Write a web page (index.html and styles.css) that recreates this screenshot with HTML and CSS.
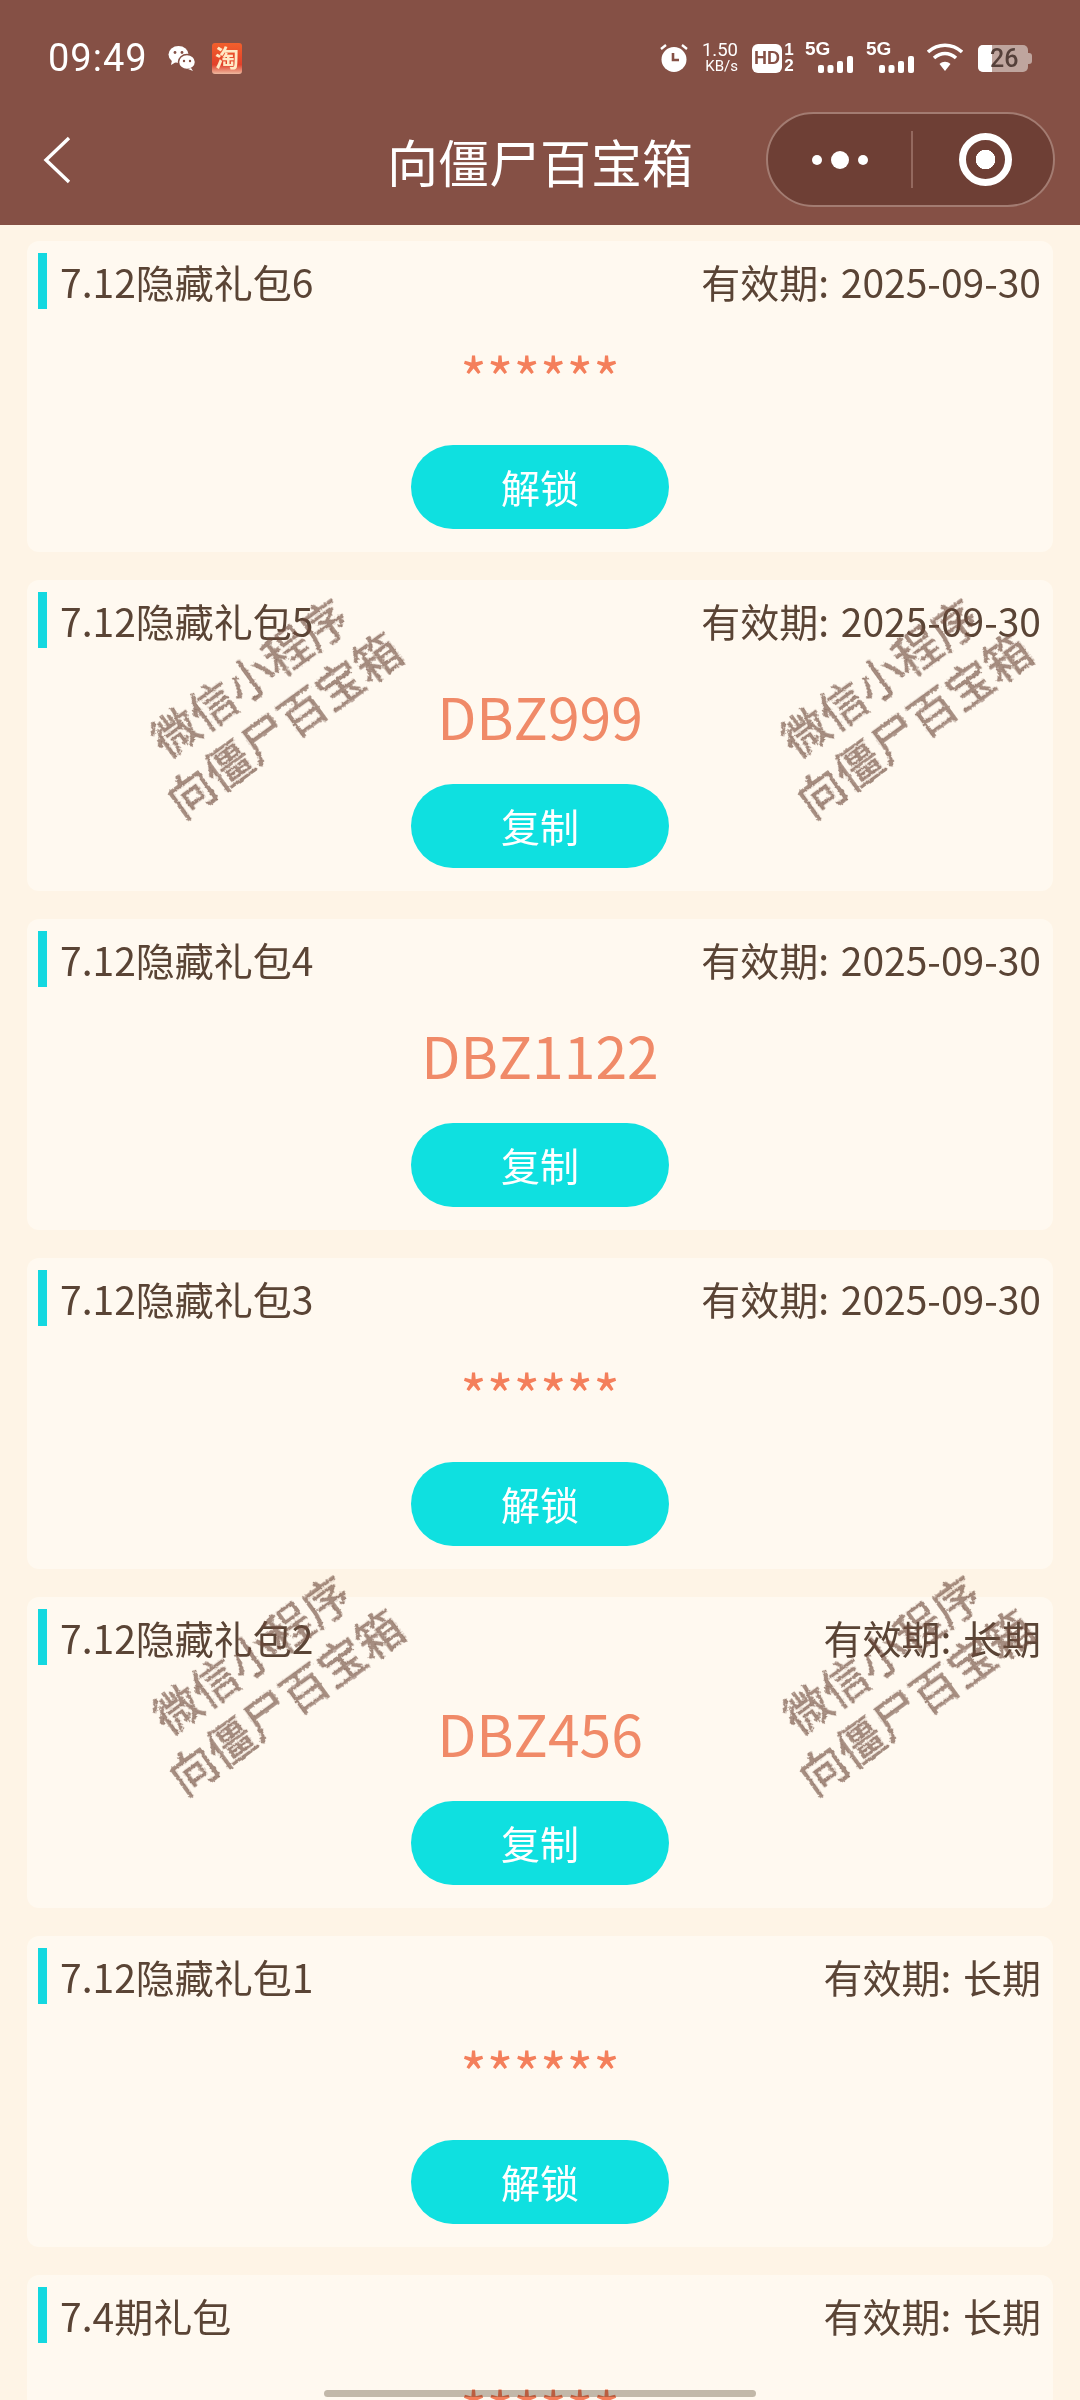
FILE: index.html
```html
<!DOCTYPE html>
<html lang="zh-CN">
<head>
    <meta charset="UTF-8">
    <meta name="viewport" content="width=device-width, initial-scale=1.0">
    <title>向僵尸百宝箱</title>
    <link rel="stylesheet" href="styles.css">
</head>
<body>
    <div class="top">
        <div class="status">
            <span class="time">09:49</span>
            <svg class="ic-wechat" width="28" height="26" viewBox="0 0 28 26">
                <ellipse cx="10.5" cy="9.5" rx="10" ry="8.5" fill="#fff"/>
                <path d="M4 15l-1 5 5-3z" fill="#fff"/>
                <ellipse cx="19" cy="17" rx="8.5" ry="7.5" fill="#fff" stroke="#855045" stroke-width="1.5"/>
                <path d="M23 23l2 3-5-2z" fill="#fff"/>
                <circle cx="7" cy="7.5" r="1.4" fill="#855045"/>
                <circle cx="14" cy="7.5" r="1.4" fill="#855045"/>
                <circle cx="16" cy="16" r="1.2" fill="#855045"/>
                <circle cx="22" cy="16" r="1.2" fill="#855045"/>
            </svg>
            <span class="ic-taobao">淘</span>
            <span class="status-right">
                <svg width="30" height="30" viewBox="0 0 30 30">
                    <circle cx="15" cy="16.5" r="12.5" fill="#fff"/>
                    <path d="M14 10v7h6" fill="none" stroke="#855045" stroke-width="2.6"/>
                    <path d="M2 6l5-4M28 6l-5-4" stroke="#fff" stroke-width="2.4"/>
                </svg>
                <span class="speed"><b>1.50</b><i>KB/s</i></span>
                <span class="hd">HD</span>
                <span class="sim"><i>1</i><i>2</i></span>
                <svg class="signal" width="48" height="32" viewBox="0 0 48 32">
                    <text x="0" y="13" class="sig-text">5G</text>
                    <rect x="13" y="23" width="6" height="8" rx="2" fill="#fff"/>
                    <rect x="22.500" y="23" width="6" height="8" rx="2" fill="#fff"/>
                    <rect x="32" y="19" width="6" height="12" rx="2" fill="#fff"/>
                    <rect x="42" y="14" width="6" height="17" rx="2" fill="#fff"/>
                </svg>
                <svg class="signal" width="48" height="32" viewBox="0 0 48 32">
                    <text x="0" y="13" class="sig-text">5G</text>
                    <rect x="13" y="23" width="6" height="8" rx="2" fill="#fff"/>
                    <rect x="22.500" y="23" width="6" height="8" rx="2" fill="#fff"/>
                    <rect x="32" y="19" width="6" height="12" rx="2" fill="#fff"/>
                    <rect x="42" y="14" width="6" height="17" rx="2" fill="#fff"/>
                </svg>
                <svg width="36" height="30" viewBox="0 0 36 30">
                    <path d="M1 9c10-9 24-9 34 0" fill="none" stroke="#fff" stroke-width="3.600"/>
                    <path d="M7 15c7-6 15-6 22 0" fill="none" stroke="#fff" stroke-width="3.600"/>
                    <path d="M12.500 21c3.500-3 7.500-3 11 0L18 28z" fill="#fff"/>
                </svg>
                <span class="battery"><span class="battery-fill"></span><span class="battery-num">26</span></span>
            </span>
        </div>
        <div class="nav">
            <svg class="back" width="28" height="48" viewBox="0 0 28 48">
                <path d="M26 2L3 24l23 22" fill="none" stroke="#fff" stroke-width="3.400"/>
            </svg>
            <h1 class="title">向僵尸百宝箱</h1>
            <div class="capsule">
                <div class="dots"><span></span><span class="big"></span><span></span></div>
                <div class="divider"></div>
                <div class="ring"><span></span></div>
            </div>
        </div>
    </div>

    <div class="list">
        <div class="card">
            <div class="head"><div class="name">7.12隐藏礼包6</div><div class="expire">有效期: 2025-09-30</div></div>
            <div class="code stars">******</div>
            <button class="btn">解锁</button>
        </div>
        <div class="card">
            <div class="head"><div class="name">7.12隐藏礼包5</div><div class="expire">有效期: 2025-09-30</div></div>
            <div class="code">DBZ999</div>
            <button class="btn">复制</button>
        </div>
        <div class="card">
            <div class="head"><div class="name">7.12隐藏礼包4</div><div class="expire">有效期: 2025-09-30</div></div>
            <div class="code">DBZ1122</div>
            <button class="btn">复制</button>
        </div>
        <div class="card">
            <div class="head"><div class="name">7.12隐藏礼包3</div><div class="expire">有效期: 2025-09-30</div></div>
            <div class="code stars">******</div>
            <button class="btn">解锁</button>
        </div>
        <div class="card">
            <div class="head"><div class="name">7.12隐藏礼包2</div><div class="expire">有效期: 长期</div></div>
            <div class="code">DBZ456</div>
            <button class="btn">复制</button>
        </div>
        <div class="card">
            <div class="head"><div class="name">7.12隐藏礼包1</div><div class="expire">有效期: 长期</div></div>
            <div class="code stars">******</div>
            <button class="btn">解锁</button>
        </div>
        <div class="card">
            <div class="head"><div class="name">7.4期礼包</div><div class="expire">有效期: 长期</div></div>
            <div class="code stars">******</div>
            <button class="btn">解锁</button>
        </div>
    </div>

    <!-- watermark sits on top of the list -->
    <div class="mark mark-a">微信小程序<br>向僵尸百宝箱</div>
    <div class="mark mark-b">微信小程序<br>向僵尸百宝箱</div>
    <div class="mark mark-c">微信小程序<br>向僵尸百宝箱</div>
    <div class="mark mark-d">微信小程序<br>向僵尸百宝箱</div>

    <div class="home-bar"></div>

    <!-- roughens the watermark edges -->
    <svg class="defs" width="0" height="0">
        <filter id="rough" x="-5%" y="-5%" width="110%" height="110%">
            <feTurbulence type="fractalNoise" baseFrequency="0.45" numOctaves="1" seed="4" result="n"/>
            <feDisplacementMap in="SourceGraphic" in2="n" scale="4"/>
        </filter>
    </svg>
</body>
</html>
```

FILE: styles.css
```css
html, body {
    margin: 0;
    height: 2400px;
    overflow: hidden;
}
body {
    position: relative;
    font-family: "Noto Sans CJK SC", "Noto Sans", sans-serif;
    background: #fef4e6;
    color: #5a4435;
}
.defs {
    position: absolute;
}

/* status bar + nav */
.top {
    height: 225px;
    background: #855045;
    color: white;
}
.status {
    height: 112px;
    display: flex;
    align-items: center;
    padding: 4px 48px 0 48px;
    box-sizing: border-box;
}
.time {
    width: 96px;
    font-family: Roboto, sans-serif;
    font-size: 38px;
    letter-spacing: 1px;
    white-space: nowrap;
    margin-right: 24px;
}
.ic-wechat {
    margin-right: 16px;
}
.ic-taobao {
    width: 30px;
    height: 31px;
    border-radius: 3px;
    background: linear-gradient(#f2602c, #e2402a 70%, #eeb9a0);
    font-size: 24px;
    line-height: 27px;
    font-weight: bold;
    text-align: center;
    color: #ffe9c4;
}
.status-right {
    margin-left: auto;
    display: flex;
    align-items: center;
}
.speed {
    display: flex;
    flex-direction: column;
    align-items: flex-end;
    width: 36px;
    margin-left: 13px;
    font-family: Roboto, sans-serif;
    line-height: 16px;
}
.speed b {
    font-size: 18.5px;
    font-weight: 400;
}
.speed i {
    font-size: 15px;
    font-style: normal;
}
.hd {
    margin-left: 14px;
    width: 30px;
    height: 29px;
    border-radius: 6px;
    background: white;
    color: #855045;
    font-family: "Liberation Sans", sans-serif;
    font-size: 18px;
    font-weight: bold;
    line-height: 29px;
    text-align: center;
}
.sim {
    display: flex;
    flex-direction: column;
    width: 12px;
    margin-left: 1px;
    margin-right: 10px;
    font-family: "Liberation Sans", sans-serif;
    font-size: 17px;
    font-weight: bold;
    line-height: 16px;
    text-align: center;
}
.sim i {
    font-style: normal;
}
.signal {
    margin-right: 12px;
    overflow: visible;
}
.signal + svg {
    margin-left: 1px;
}
.sig-text {
    font-family: "Liberation Sans", sans-serif;
    font-size: 19px;
    font-weight: bold;
    fill: white;
}
.battery {
    position: relative;
    margin-left: 15px;
    margin-right: 4px;
    width: 50px;
    height: 27px;
    border-radius: 5px;
    background: #bfa59e;
}
.battery::after {
    content: "";
    position: absolute;
    left: 50px;
    top: 8px;
    width: 4px;
    height: 11px;
    border-radius: 0 3px 3px 0;
    background: #bfa59e;
}
.battery-fill {
    display: block;
    width: 14px;
    height: 27px;
    border-radius: 5px 0 0 5px;
    background: white;
}
.battery-num {
    position: absolute;
    left: 12px;
    top: 0;
    font-family: Roboto, sans-serif;
    font-size: 25px;
    font-weight: 500;
    line-height: 27px;
    color: #55403a;
}

.nav {
    position: relative;
    height: 113px;
    box-sizing: border-box;
    padding-bottom: 16px;
    display: flex;
    align-items: center;
    justify-content: center;
}
.back {
    position: absolute;
    left: 43px;
    top: 24px;
}
.title {
    margin: 0;
    font-size: 51px;
    font-weight: normal;
    line-height: 96px;
}
.capsule {
    position: absolute;
    left: 766px;
    top: 0;
    width: 289px;
    height: 95px;
    box-sizing: border-box;
    display: flex;
    align-items: center;
    background: #6e3f35;
    border: 2px solid #a37c72;
    border-radius: 48px;
}
.dots {
    width: 143px;
    display: flex;
    justify-content: center;
    align-items: center;
    gap: 9px;
}
.dots span {
    width: 10px;
    height: 10px;
    border-radius: 50%;
    background: white;
}
.dots .big {
    width: 18px;
    height: 18px;
}
.divider {
    width: 2px;
    height: 57px;
    background: #94695f;
}
.ring {
    flex: 1;
    display: flex;
    justify-content: center;
    padding-left: 4px;
}
.ring span {
    width: 53px;
    height: 53px;
    box-sizing: border-box;
    border: 7px solid white;
    border-radius: 50%;
    background: radial-gradient(circle, white 0 9.500px, transparent 10px);
}

/* gift cards */
.list {
    padding: 16px 27px 0;
    display: flex;
    flex-direction: column;
    gap: 28px;
}
.card {
    height: 311px;
    flex: none;
    box-sizing: border-box;
    padding: 12px 12px 23px;
    display: flex;
    flex-direction: column;
    background: #fff9f0;
    border-radius: 12px;
}
.head {
    height: 56px;
    margin-left: -1px;
    display: flex;
    justify-content: space-between;
    align-items: center;
    font-size: 39px;
    line-height: 56px;
}
.name {
    padding-left: 13px;
    border-left: 9px solid #14d8e0;
}
.expire {
    word-spacing: 3px;
}
.code {
    flex: 1;
    display: flex;
    align-items: center;
    justify-content: center;
    padding-bottom: 2px;
    font-size: 57px;
    color: #f08a68;
}
.stars {
    color: #f47f5b;
}
.btn {
    align-self: center;
    width: 258px;
    height: 84px;
    border: none;
    padding: 0 0 2px;
    border-radius: 42px;
    background: #0fe0e0;
    color: white;
    font-family: inherit;
    font-size: 39px;
}

/* watermark */
.mark {
    position: absolute;
    width: 330px;
    font-size: 46px;
    line-height: 58px;
    text-align: center;
    color: rgba(110, 75, 60, 0.62);
    -webkit-text-stroke: 0.6px rgba(110, 75, 60, 0.62);
    transform: rotate(-36deg);
    filter: url(#rough);
    pointer-events: none;
}
.mark-a { left: 100px; top: 641px; }
.mark-b { left: 730px; top: 641px; }
.mark-c { left: 102px; top: 1618px; }
.mark-d { left: 732px; top: 1618px; }

.home-bar {
    position: absolute;
    left: 324px;
    top: 2390px;
    width: 432px;
    height: 7px;
    border-radius: 4px;
    background: #c2bdb4;
    mix-blend-mode: multiply;
}
```
